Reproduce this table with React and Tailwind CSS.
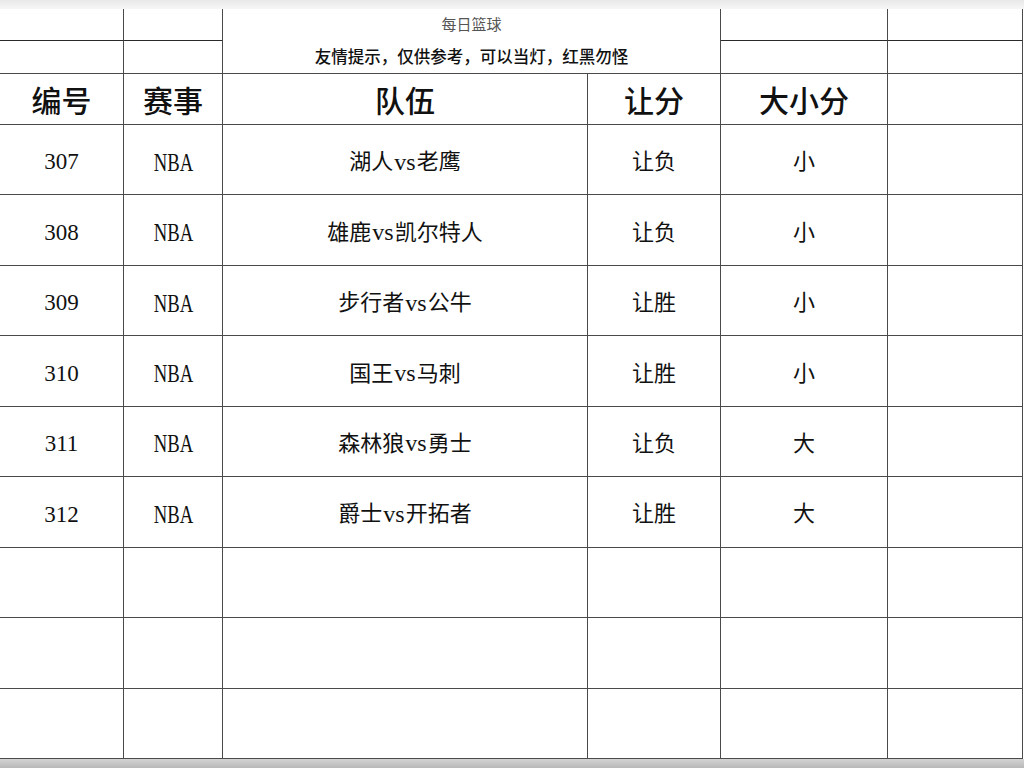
const serif = "font-['Liberation_Serif','Noto_Sans_CJK_SC',serif]";

const games = [
  { id: "307", league: "NBA", teams: ["湖人", "老鹰"], spread: "让负", total: "小" },
  { id: "308", league: "NBA", teams: ["雄鹿", "凯尔特人"], spread: "让负", total: "小" },
  { id: "309", league: "NBA", teams: ["步行者", "公牛"], spread: "让胜", total: "小" },
  { id: "310", league: "NBA", teams: ["国王", "马刺"], spread: "让胜", total: "小" },
  { id: "311", league: "NBA", teams: ["森林狼", "勇士"], spread: "让负", total: "大" },
  { id: "312", league: "NBA", teams: ["爵士", "开拓者"], spread: "让胜", total: "大" },
];

// three blank rows at the bottom of the sheet
const rows = [...games, null, null, null];

const Cell = ({ children, className = "" }) => (
  <div className={`flex items-center justify-center border-r border-b border-[#4a4a4a] ${className}`}>
    {children}
  </div>
);

const App = () => {
  return (
    <div className={`flex h-screen w-[1024px] flex-col bg-white text-[#111] ${serif}`}>
      {/* top edge of the viewer */}
      <div className="h-[9px] bg-gradient-to-b from-[#e9e9e9] to-[#f6f6f6]" />

      <div className="grid flex-1 grid-cols-[124px_99px_365px_133px_167px_135px] grid-rows-[32px_33px_51px_repeat(9,minmax(0,1fr))]">
        {/* title rows */}
        <Cell className="col-start-1 row-start-1 border-b-[#2a2a2a]" />
        <Cell className="col-start-2 row-start-1 border-b-[#2a2a2a]" />
        <div className="col-span-2 col-start-3 row-span-2 row-start-1 flex flex-col items-center border-r border-b border-[#4a4a4a]">
          <div className="flex h-[32px] items-center pt-[2px] text-[15px] text-[#555]">每日篮球</div>
          <div className="flex h-[33px] items-center pt-[4px] text-[16.5px] font-medium">友情提示，仅供参考，可以当灯，红黑勿怪</div>
        </div>
        <Cell className="col-start-5 row-start-1 border-b-[#2a2a2a]" />
        <Cell className="col-start-6 row-start-1 border-b-[#2a2a2a]" />
        <Cell className="col-start-1 row-start-2" />
        <Cell className="col-start-2 row-start-2" />
        <Cell className="col-start-5 row-start-2" />
        <Cell className="col-start-6 row-start-2" />

        {/* header */}
        {["编号", "赛事", "队伍", "让分", "大小分", ""].map((h, i) => (
          <Cell key={i} className="pt-[5px] text-[30px] font-medium leading-none">
            {h}
          </Cell>
        ))}

        {/* data */}
        {rows.map((g, r) =>
          g ? (
            [
              <Cell key={`${r}a`} className="pt-[6px] text-[23px]">{g.id}</Cell>,
              <Cell key={`${r}b`} className="pt-[5px] text-[26px]">
                <span className="inline-block scale-x-72">{g.league}</span>
              </Cell>,
              <Cell key={`${r}c`} className="pt-[4px] text-[22px]">
                {g.teams[0]}
                <span className="px-[1px] text-[24px]">vs</span>
                {g.teams[1]}
              </Cell>,
              <Cell key={`${r}d`} className="pt-[4px] text-[22px]">{g.spread}</Cell>,
              <Cell key={`${r}e`} className="pt-[4px] text-[22px]">{g.total}</Cell>,
              <Cell key={`${r}f`} />,
            ]
          ) : (
            [0, 1, 2, 3, 4, 5].map((c) => <Cell key={`${r}${c}`} />)
          )
        )}
      </div>

      {/* bottom edge of the viewer */}
      <div className="h-[9px] bg-gradient-to-b from-[#d4d4d4] to-[#b8b8b8]" />
    </div>
  );
};

export default App;
